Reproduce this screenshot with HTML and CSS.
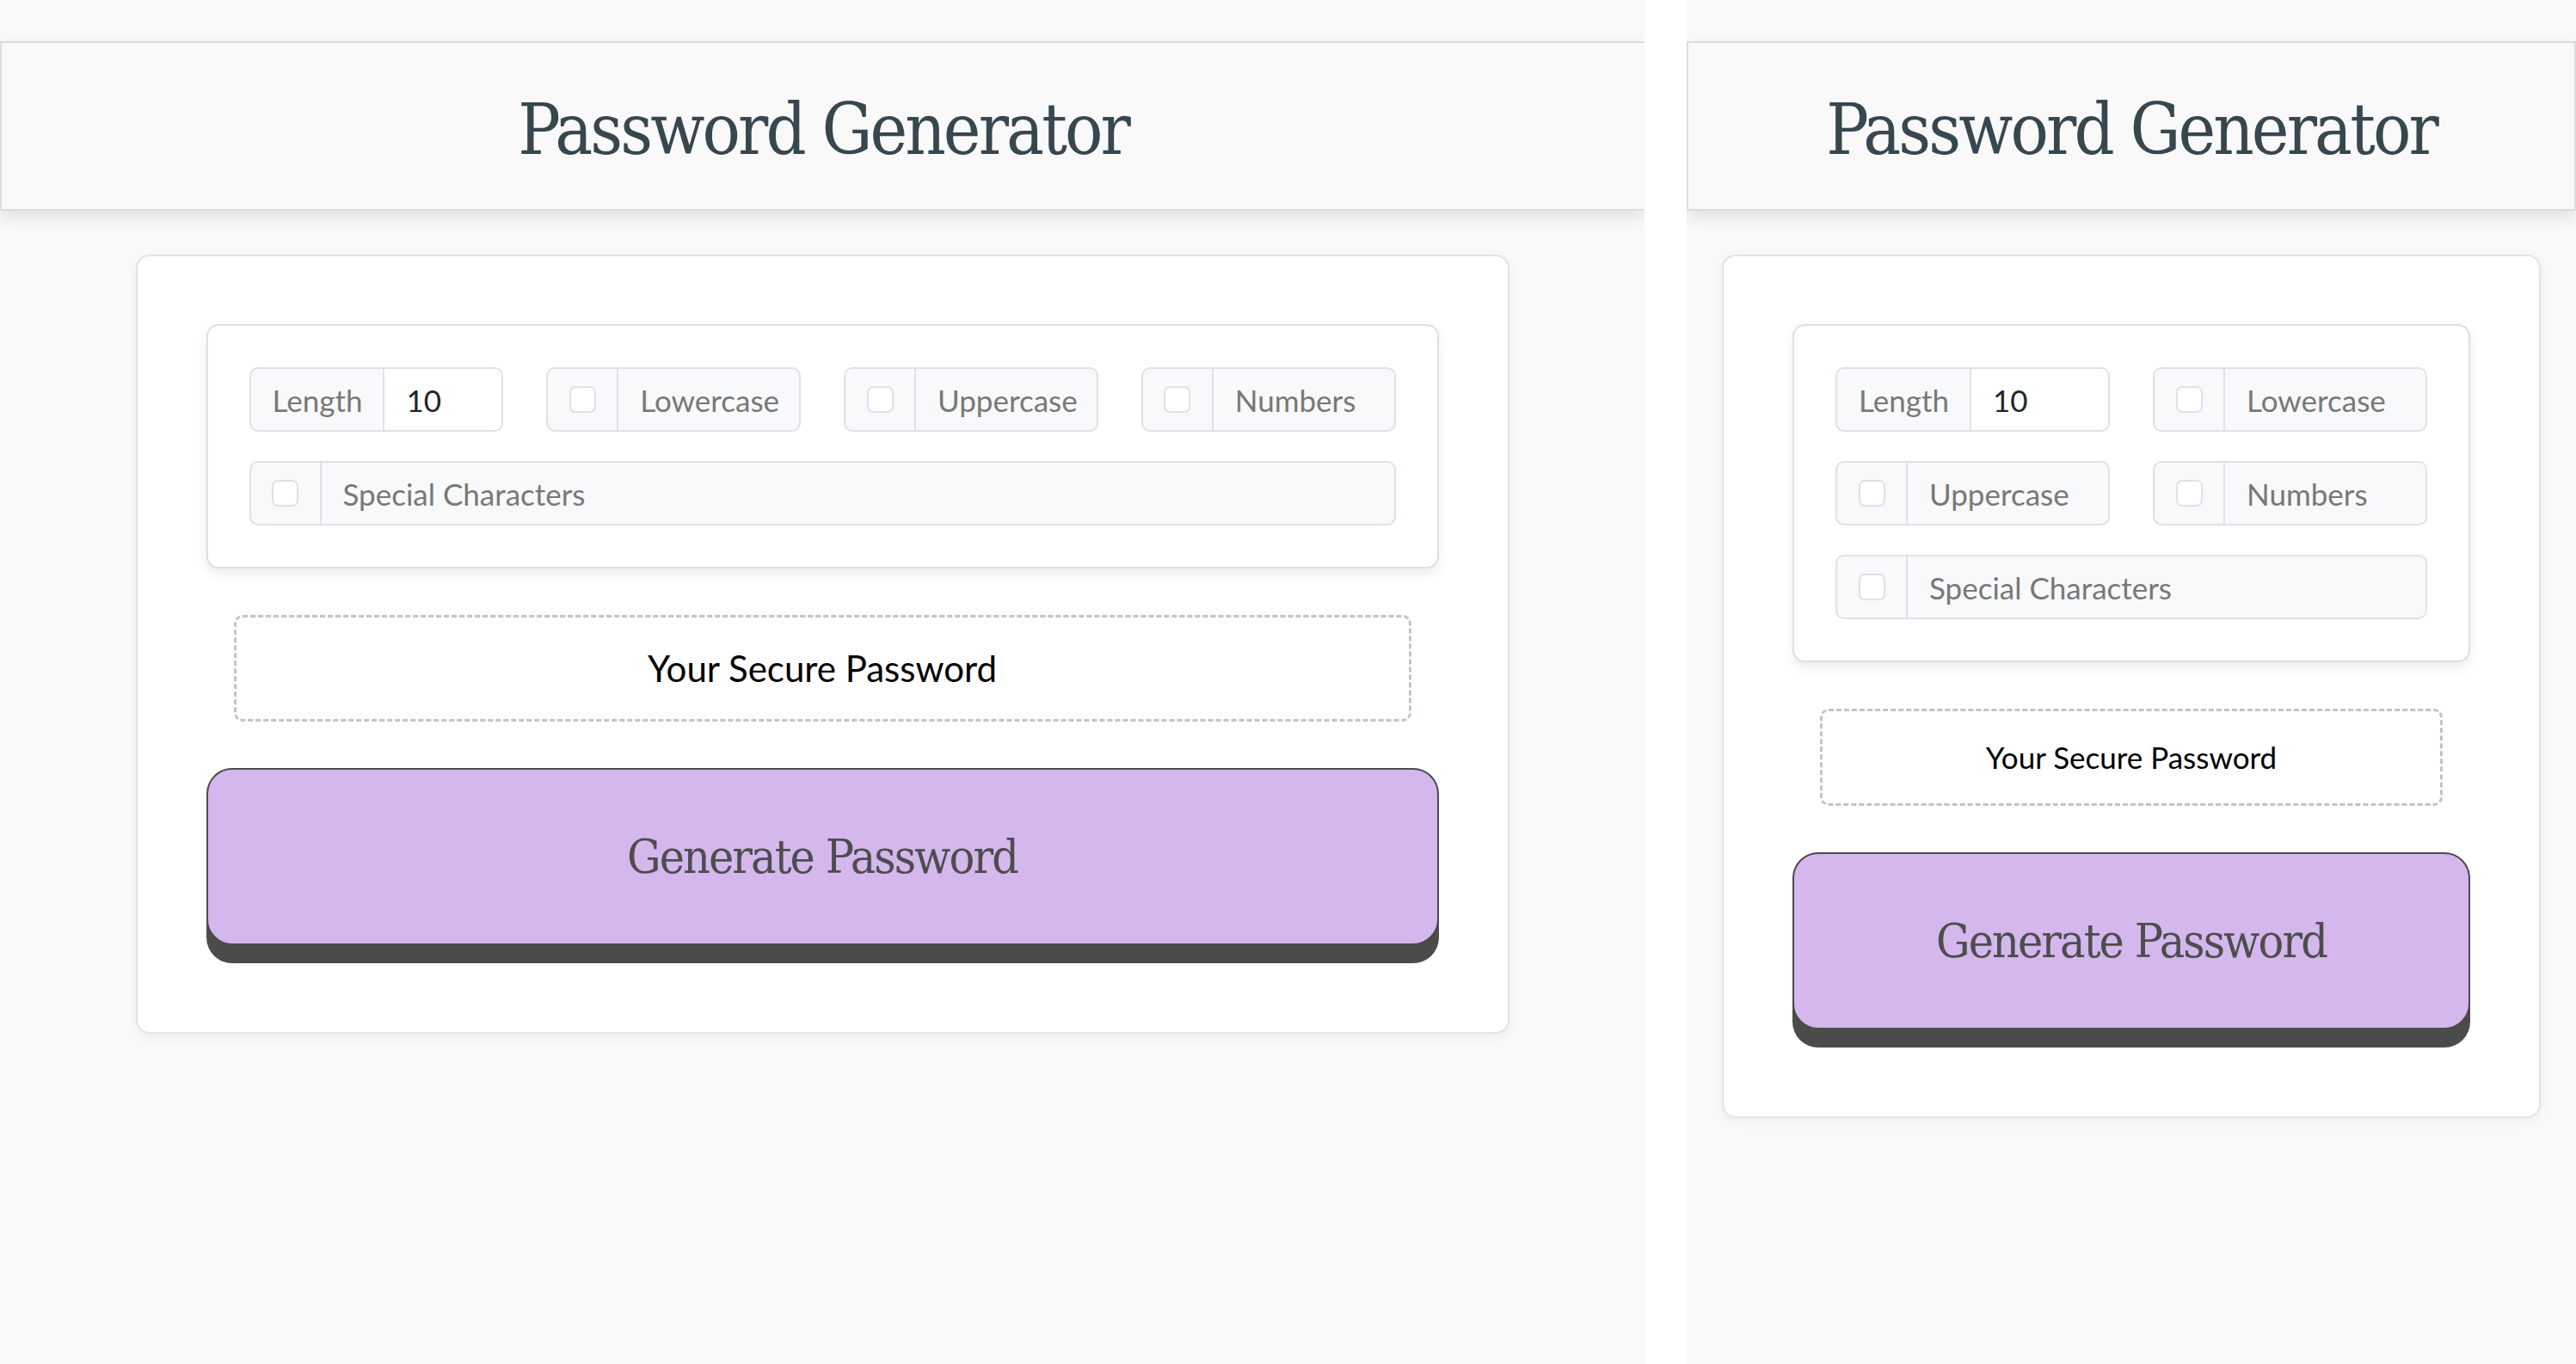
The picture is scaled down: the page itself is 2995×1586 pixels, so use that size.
FILE: index.html
```html
<!DOCTYPE html>
<html lang="en">
<head>
<meta charset="utf-8">
<title>Password Generator</title>
<link rel="stylesheet" href="styles.css">
</head>
<body>
<div class="stage">
  <section class="pane pane-wide">
    <header class="topbar"><h1 class="title">Password Generator</h1></header>
    <main class="card">
      <div class="options options-4">
        <div class="opt-group">
          <span class="opt-label opt-label-first">Length</span>
          <input class="opt-input" type="text" value="10">
        </div>
        <div class="opt-group">
          <span class="opt-check"><input class="checkbox" type="checkbox"></span>
          <span class="opt-label">Lowercase</span>
        </div>
        <div class="opt-group">
          <span class="opt-check"><input class="checkbox" type="checkbox"></span>
          <span class="opt-label">Uppercase</span>
        </div>
        <div class="opt-group">
          <span class="opt-check"><input class="checkbox" type="checkbox"></span>
          <span class="opt-label">Numbers</span>
        </div>
        <div class="opt-group opt-full">
          <span class="opt-check"><input class="checkbox" type="checkbox"></span>
          <span class="opt-label">Special Characters</span>
        </div>
      </div>
      <div class="display">Your Secure Password</div>
      <button class="generate" type="button">Generate Password</button>
    </main>
  </section>
  <section class="pane pane-narrow">
    <header class="topbar"><h1 class="title">Password Generator</h1></header>
    <main class="card">
      <div class="options options-2">
        <div class="opt-group">
          <span class="opt-label opt-label-first">Length</span>
          <input class="opt-input" type="text" value="10">
        </div>
        <div class="opt-group">
          <span class="opt-check"><input class="checkbox" type="checkbox"></span>
          <span class="opt-label">Lowercase</span>
        </div>
        <div class="opt-group">
          <span class="opt-check"><input class="checkbox" type="checkbox"></span>
          <span class="opt-label">Uppercase</span>
        </div>
        <div class="opt-group">
          <span class="opt-check"><input class="checkbox" type="checkbox"></span>
          <span class="opt-label">Numbers</span>
        </div>
        <div class="opt-group opt-full">
          <span class="opt-check"><input class="checkbox" type="checkbox"></span>
          <span class="opt-label">Special Characters</span>
        </div>
      </div>
      <div class="display">Your Secure Password</div>
      <button class="generate" type="button">Generate Password</button>
    </main>
  </section>
</div>
</body>
</html>
```
FILE: styles.css
```css
* { box-sizing: border-box; }

html, body {
  margin: 0;
  padding: 0;
  background: #ffffff;
}

body {
  font-family: Lato, "Noto Sans", sans-serif;
}

.stage {
  display: flex;
  gap: 49px;
  height: 1586px;
  overflow: hidden;
}

.pane {
  background: #f8f9fa;
  padding-top: 48px;
  height: 100%;
  overflow: hidden;
}

.pane-wide {
  width: 1912px;
  flex: none;
}

.pane-narrow {
  flex: 1;
}

.topbar {
  height: 197px;
  background: #f9f9f9;
  border: 2px solid #d9dbde;
  box-shadow: 0 8px 18px rgba(0, 0, 0, 0.10);
  display: flex;
  align-items: center;
  justify-content: center;
}

.pane-wide .topbar {
  border-right: 0;
}

.title {
  margin: 0;
  font-family: "DejaVu Serif Condensed", "DejaVu Serif", serif;
  font-stretch: condensed;
  font-weight: normal;
  font-size: 82px;
  letter-spacing: -0.035em;
  color: #37474f;
  line-height: 1;
  padding-top: 8px;
}

.card {
  display: block;
  margin: 51px auto 0;
  background: #ffffff;
  border: 2px solid #e2e3e5;
  border-radius: 16px;
  padding: 79px 80px 80px;
  box-shadow: 0 4px 14px rgba(0, 0, 0, 0.05);
}

.pane-wide .card {
  width: 1597px;
}

.pane-narrow .card {
  margin-left: 41px;
  margin-right: 41px;
}

.options {
  display: grid;
  column-gap: 50px;
  row-gap: 34px;
  background: #ffffff;
  border: 2px solid #dfe0e2;
  border-radius: 14px;
  padding: 48px;
  box-shadow: 0 6px 14px rgba(0, 0, 0, 0.08);
}

.options-4 { grid-template-columns: repeat(4, 1fr); }
.options-2 { grid-template-columns: repeat(2, 1fr); }

.opt-full { grid-column: 1 / -1; }

.opt-group {
  display: flex;
  align-items: stretch;
  height: 75px;
  background: #f8f9fa;
  border: 2px solid #dee2e6;
  border-radius: 10px;
  overflow: hidden;
}

.opt-check {
  flex: none;
  width: 82px;
  display: flex;
  align-items: center;
  justify-content: center;
  border-right: 2px solid #dee2e6;
}

.checkbox {
  appearance: none;
  -webkit-appearance: none;
  margin: 0;
  width: 31px;
  height: 31px;
  background: #ffffff;
  border: 2px solid #dee2e6;
  border-radius: 7px;
}

.opt-label {
  display: flex;
  align-items: center;
  padding: 0 24px 0 25px;
  font-size: 35px;
  color: #787878;
  white-space: nowrap;
}

.opt-label-first {
  flex: none;
  border-right: 2px solid #dee2e6;
}

.opt-input {
  flex: 1;
  min-width: 0;
  border: 0;
  margin: 0;
  padding: 0 25px;
  background: #ffffff;
  font-family: Lato, "Noto Sans", sans-serif;
  font-size: 35px;
  color: #212529;
  outline: none;
}

.display {
  margin: 54px 32px 0;
  border: 3px dashed #bfc5cc;
  border-radius: 10px;
  padding: 27px 20px;
  text-align: center;
  color: #000000;
  font-size: 42px;
  line-height: 64px;
}

.pane-narrow .display {
  font-size: 35px;
  line-height: 53px;
}

.generate {
  display: block;
  width: 100%;
  height: 206px;
  margin: 54px 0 21px;
  background: #d4b7ed;
  border: 2px solid #4b4b4b;
  border-radius: 30px;
  box-shadow: 0 21px 0 #4b4b4b;
  font-family: "DejaVu Serif Condensed", "DejaVu Serif", serif;
  font-stretch: condensed;
  font-size: 55px;
  letter-spacing: -0.035em;
  color: #4d4d4d;
  cursor: pointer;
}
```
